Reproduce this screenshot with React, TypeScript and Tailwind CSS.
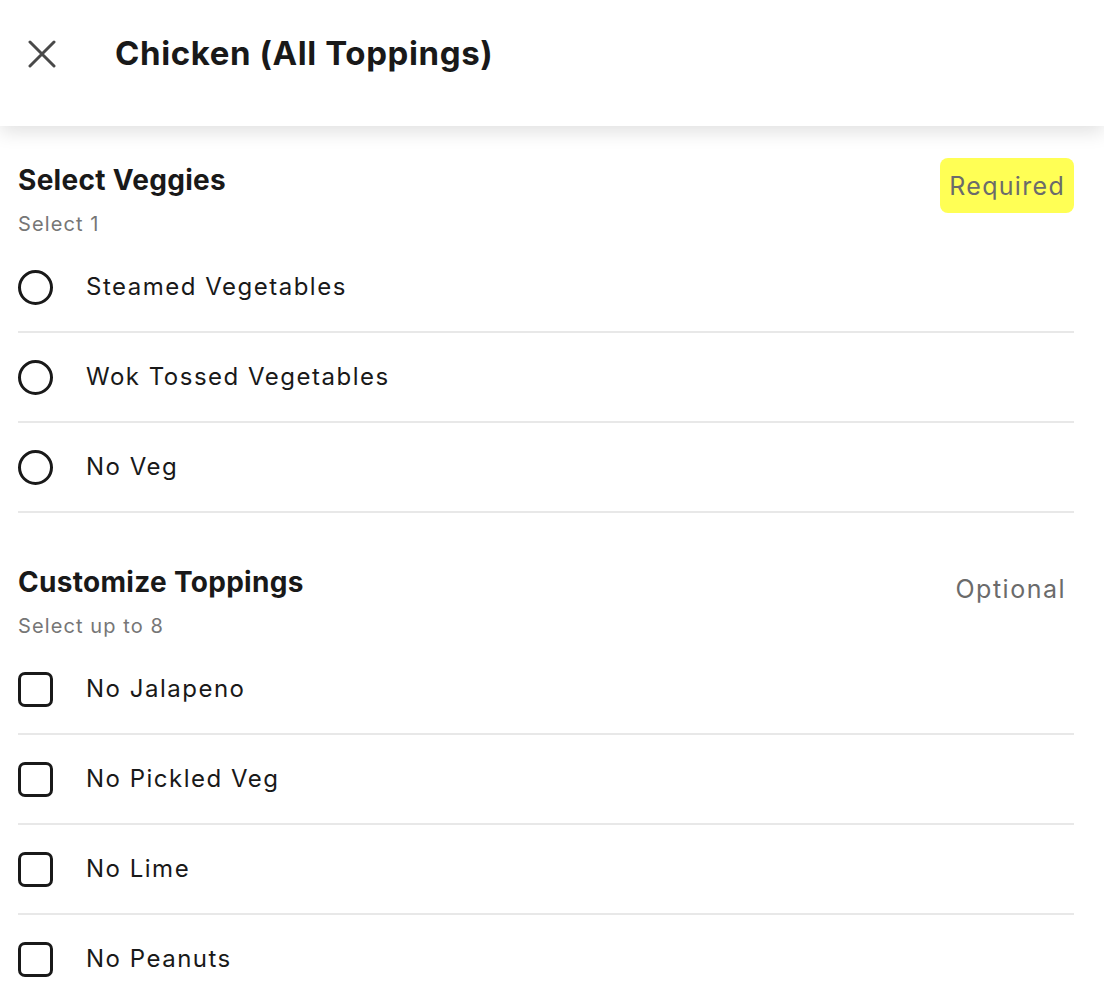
import React from "react";

const font = { fontFamily: "Inter, 'Noto Sans', sans-serif" };

function Radio() {
  return <span className="block w-[35px] h-[35px] rounded-full border-[3px] border-[#191919] shrink-0" />;
}
function Check() {
  return <span className="block w-[35px] h-[35px] rounded-[7px] border-[3px] border-[#191919] shrink-0" />;
}

function Row({ label, kind }: { label: string; kind: "radio" | "check" }) {
  return (
    <div className="flex items-center h-[90px] border-b-2 border-[#e8e8e8]">
      {kind === "radio" ? <Radio /> : <Check />}
      <span className="ml-[33px] text-[24px] tracking-[1.5px] text-[#191919]">{label}</span>
    </div>
  );
}

export default function App() {
  return (
    <div className="w-[1104px] h-[987px] bg-white overflow-hidden" style={font}>
      <header className="relative z-10 h-[126px] bg-white flex items-center shadow-[0_6px_18px_rgba(0,0,0,0.12)]">
        <svg className="ml-[28px] mt-[-18px]" width="28" height="28" viewBox="0 0 28 28" fill="none" stroke="#494949" strokeWidth="3" strokeLinecap="round">
          <path d="M2 2 L26 26 M26 2 L2 26" />
        </svg>
        <h1 className="ml-[59px] mt-[-18px] text-[33px] tracking-[0.6px] font-bold text-[#191919]">Chicken (All Toppings)</h1>
      </header>
      <main className="pl-[18px] pr-[30px]">
        <section className="pt-[32px]">
          <div className="flex justify-between items-start">
            <div>
              <h2 className="text-[28px] leading-[44px] tracking-[0.3px] font-bold text-[#191919]">Select Veggies</h2>
              <p className="mt-[8px] text-[20px] leading-[28px] tracking-[1.1px] text-[#767676]">Select 1</p>
            </div>
            <span className="h-[55px] px-[9px] pt-[3px] flex items-center rounded-[8px] bg-[#ffff55] text-[25px] tracking-[1.3px] text-[#6b6b6b]">Required</span>
          </div>
          <div className="mt-[5px]">
            <Row kind="radio" label="Steamed Vegetables" />
            <Row kind="radio" label="Wok Tossed Vegetables" />
            <Row kind="radio" label="No Veg" />
          </div>
        </section>
        <section className="pt-[47px]">
          <div className="flex justify-between items-start">
            <div>
              <h2 className="text-[28px] leading-[44px] tracking-[0.3px] font-bold text-[#191919]">Customize Toppings</h2>
              <p className="mt-[8px] text-[20px] leading-[28px] tracking-[1.1px] text-[#767676]">Select up to 8</p>
            </div>
            <span className="mt-[2px] h-[55px] px-[8px] flex items-center text-[25px] tracking-[1.5px] text-[#6b6b6b]">Optional</span>
          </div>
          <div className="mt-[5px]">
            <Row kind="check" label="No Jalapeno" />
            <Row kind="check" label="No Pickled Veg" />
            <Row kind="check" label="No Lime" />
            <Row kind="check" label="No Peanuts" />
          </div>
        </section>
      </main>
    </div>
  );
}
